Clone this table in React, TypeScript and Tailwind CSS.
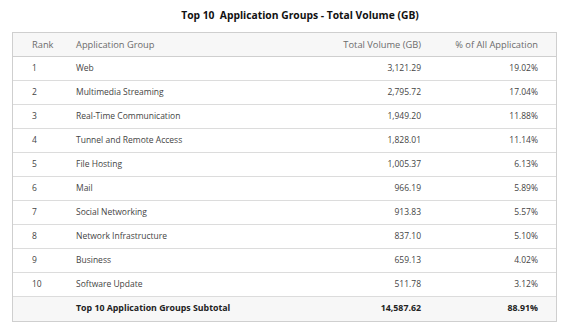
// Top 10 Application Groups report table

const rows = [
  { rank: 1, group: 'Web', volume: '3,121.29', pct: '19.02%' },
  { rank: 2, group: 'Multimedia Streaming', volume: '2,795.72', pct: '17.04%' },
  { rank: 3, group: 'Real-Time Communication', volume: '1,949.20', pct: '11.88%' },
  { rank: 4, group: 'Tunnel and Remote Access', volume: '1,828.01', pct: '11.14%' },
  { rank: 5, group: 'File Hosting', volume: '1,005.37', pct: '6.13%' },
  { rank: 6, group: 'Mail', volume: '966.19', pct: '5.89%' },
  { rank: 7, group: 'Social Networking', volume: '913.83', pct: '5.57%' },
  { rank: 8, group: 'Network Infrastructure', volume: '837.10', pct: '5.10%' },
  { rank: 9, group: 'Business', volume: '659.13', pct: '4.02%' },
  { rank: 10, group: 'Software Update', volume: '511.78', pct: '3.12%' },
];

const cols = 'grid grid-cols-[63px_195px_150px_135px] items-center h-[24px]';

export default function App() {
  return (
    <div className="w-[564px] h-[326px] bg-white font-['Open_Sans',sans-serif]">
      {/* Title */}
      <div className="h-[32px] flex items-center justify-center pl-[36px] text-[10.3px] font-bold text-[#111] whitespace-pre">
        Top 10  Application Groups - Total Volume (GB)
      </div>

      {/* Table */}
      <div className="ml-[12px] w-[545px] border border-[#cfcfcf]">
        <div className={`${cols} bg-[#f7f7f7] border-b border-[#cfcfcf] text-[9.3px] text-[#6b6b6b]`}>
          <div className="pl-[19px]">Rank</div>
          <div>Application Group</div>
          <div className="text-right">Total Volume (GB)</div>
          <div className="text-right pr-[18px]">% of All Application</div>
        </div>

        {rows.map((r) => (
          <div key={r.rank} className={`${cols} border-b border-[#dcdcdc] text-[8.5px] text-[#444]`}>
            <div className="pl-[19px]">{r.rank}</div>
            <div>{r.group}</div>
            <div className="text-right">{r.volume}</div>
            <div className="text-right pr-[18px]">{r.pct}</div>
          </div>
        ))}

        {/* Subtotal */}
        <div className={`${cols} bg-[#f7f7f7] text-[8.8px] font-bold text-[#222]`}>
          <div />
          <div>Top 10 Application Groups Subtotal</div>
          <div className="text-right">14,587.62</div>
          <div className="text-right pr-[18px]">88.91%</div>
        </div>
      </div>
    </div>
  );
}
